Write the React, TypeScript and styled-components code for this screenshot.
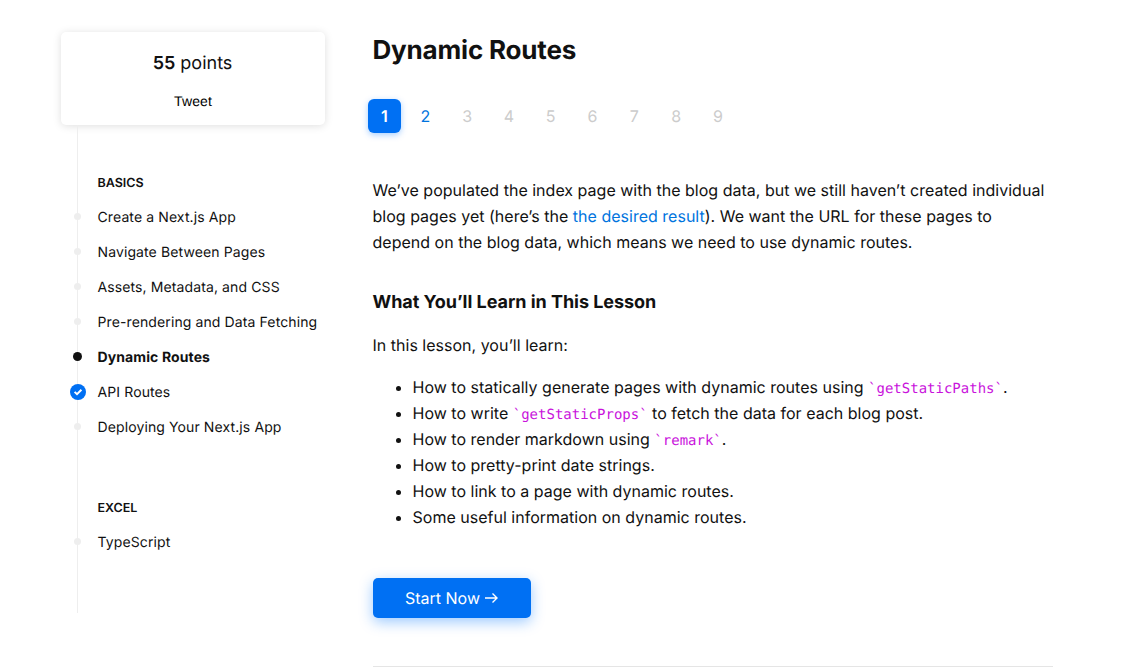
import React from "react";
import styled, { createGlobalStyle } from "styled-components";

const Global = createGlobalStyle`
  *{box-sizing:border-box}
  html,body{margin:0;background:#fff;color:#111}
  body{font-family:Inter,"Liberation Sans",sans-serif;font-weight:400;height:667px;overflow:hidden;-webkit-font-smoothing:antialiased;text-rendering:geometricPrecision}
  p,h1,h2,h3,ul,ol{margin:0;padding:0}
`;
const Page = styled.div`display:flex;height:667px;overflow:hidden;padding-left:61px;`;
const Sidebar = styled.aside`width:264px;margin-right:47.5px;flex:none;padding-top:32px;`;
const Card = styled.div`height:93px;border-radius:5px;background:#fff;box-shadow:0 1px 8px rgba(0,0,0,.13);text-align:center;`;
const Points = styled.div`font-size:18px;line-height:26px;padding-top:19px;padding-right:1px;b{font-weight:600}`;
const Tweet = styled.div`font-family:"Liberation Sans",Arial,sans-serif;font-size:14px;line-height:20px;margin-top:14px;color:#000;letter-spacing:.1px;`;
const Nav = styled.nav`margin-left:16px;height:488px;border-left:1px solid #eee;padding-top:49px;`;
const Group = styled.section`margin-bottom:55px;`;
const GroupTitle = styled.h3`font-size:12.5px;line-height:20px;font-weight:600;padding-left:19.5px;margin-bottom:5px;`;
const Lesson = styled.div<{ $active?: boolean }>`display:flex;align-items:center;height:35px;font-size:14px;letter-spacing:.11px;font-weight:${p => p.$active ? 700 : 400};white-space:nowrap;`;
const LessonName = styled.span`padding-top:2px;`;
const Marker = styled.span`width:18px;height:18px;flex:none;margin-left:-9.5px;margin-right:11px;display:flex;align-items:center;justify-content:center;`;
const Dot = styled.i<{ $active?: boolean }>`display:block;width:${p => p.$active ? 9 : 7}px;height:${p => p.$active ? 9 : 7}px;border-radius:50%;background:${p => p.$active ? "#111" : "#eee"};`;
const Main = styled.main`width:680px;padding-top:33px;`;
const Title = styled.h1`font-size:26px;line-height:36px;font-weight:700;letter-spacing:-.18px;`;
const Steps = styled.div`display:flex;gap:8.8px;margin:30px 0 0 -4.5px;`;
const Step = styled.span<{ $state: string }>`width:33px;height:34px;border-radius:6px;display:flex;align-items:center;justify-content:center;font-size:16px;
  padding-right:${p => p.$state === "current" ? 0 : 2}px;
  color:${p => p.$state === "current" ? "#fff" : p.$state === "next" ? "#0074de" : "#ccc"};
  font-weight:${p => p.$state === "current" ? 600 : 400};
  background:${p => p.$state === "current" ? "#0070f3" : "transparent"};
  box-shadow:${p => p.$state === "current" ? "0 2px 6px rgba(0,118,255,.35)" : "none"};`;
const Text = styled.p`font-size:16px;line-height:26px;white-space:nowrap;letter-spacing:.01px;`;
const Intro = styled(Text)`margin-top:44px;`;
const Link = styled.a`color:#0074de;`;
const Heading = styled.h2`font-size:18px;line-height:28px;font-weight:700;letter-spacing:-.04px;margin:34px 0 15px;`;
const List = styled.ul`margin-top:16px;padding-left:40px;font-size:16px;line-height:26px;letter-spacing:.01px;li{white-space:nowrap;height:26px}`;
const Code = styled.code`font-family:"DejaVu Sans Mono",monospace;font-size:14px;line-height:1;letter-spacing:0;color:#c913dc;`;
const Button = styled.button`display:flex;align-items:center;justify-content:center;gap:5px;margin:48px 0;width:158px;height:40px;border:0;border-radius:5px;background:#0070f3;color:#fff;font:16px Inter,sans-serif;box-shadow:0 4px 14px rgba(0,118,255,.39);text-rendering:inherit;`;
const Rule = styled.div`height:1px;background:#e5e5e5;`;

const Check = () => <svg width="16" height="16" viewBox="0 0 16 16"><circle cx="8" cy="8" r="8" fill="#0070f3"/><path d="M4.6 7.9 7 10.200 11.400 5.800" fill="none" stroke="#fff" strokeWidth="2"/></svg>;
const basics = ["Create a Next.js App", "Navigate Between Pages", "Assets, Metadata, and CSS", "Pre-rendering and Data Fetching", "Dynamic Routes", "API Routes", "Deploying Your Next.js App"];
const LessonRow = ({ name }: { name: string }) => {
  const active = name === "Dynamic Routes";
  return <Lesson $active={active}><Marker>{name === "API Routes" ? <Check/> : <Dot $active={active}/>}</Marker><LessonName>{name}</LessonName></Lesson>;
};

export default function App() {
  return <><Global/><Page>
    <Sidebar>
      <Card><Points><b>55</b> points</Points><Tweet>Tweet</Tweet></Card>
      <Nav>
        <Group><GroupTitle>BASICS</GroupTitle>{basics.map(n => <LessonRow key={n} name={n}/>)}</Group>
        <Group><GroupTitle>EXCEL</GroupTitle><LessonRow name="TypeScript"/></Group>
      </Nav>
    </Sidebar>
    <Main>
      <Title>Dynamic Routes</Title>
      <Steps>{[1,2,3,4,5,6,7,8,9].map(n => <Step key={n} $state={n === 1 ? "current" : n === 2 ? "next" : "locked"}>{n}</Step>)}</Steps>
      <Intro>We’ve populated the index page with the blog data, but we still haven’t created individual<br/>blog pages yet (here’s the <Link>the desired result</Link>). We want the URL for these pages to<br/>depend on the blog data, which means we need to use dynamic routes.</Intro>
      <Heading>What You’ll Learn in This Lesson</Heading>
      <Text>In this lesson, you’ll learn:</Text>
      <List>
        <li>How to statically generate pages with dynamic routes using <Code>`getStaticPaths`</Code>.</li>
        <li>How to write <Code>`getStaticProps`</Code> to fetch the data for each blog post.</li>
        <li>How to render markdown using <Code>`remark`</Code>.</li>
        <li>How to pretty-print date strings.</li>
        <li>How to link to a page with dynamic routes.</li>
        <li>Some useful information on dynamic routes.</li>
      </List>
      <Button>Start Now <svg width="13" height="12" viewBox="0 0 13 12" fill="none" stroke="#fff" strokeWidth="1.4"><path d="M0 6h12M7.500 1.500 12 6l-4.500 4.500"/></svg></Button>
      <Rule/>
    </Main>
  </Page></>;
}
